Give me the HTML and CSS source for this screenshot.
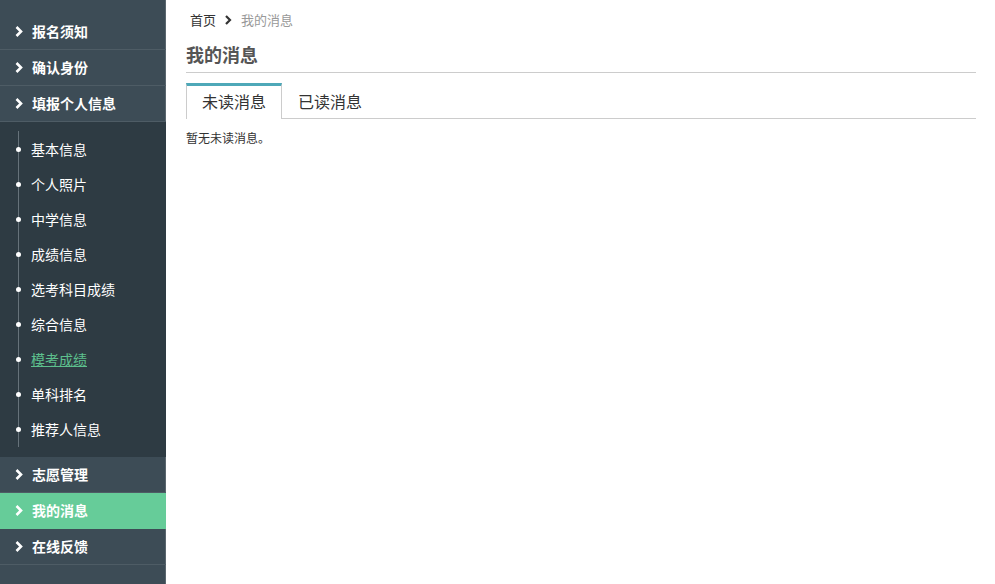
FILE: index.html
```html
<!DOCTYPE html>
<html lang="zh">
<head>
<meta charset="utf-8">
<title>我的消息</title>
<link rel="stylesheet" href="styles.css">
</head>
<body>
<div class="page">
  <aside class="sidebar">
    <div class="nav-item"><svg class="chev" viewBox="0 0 8 12"><polyline points="1.5,1.5 6,6 1.5,10.5"/></svg><span>报名须知</span></div>
    <div class="nav-item"><svg class="chev" viewBox="0 0 8 12"><polyline points="1.5,1.5 6,6 1.5,10.5"/></svg><span>确认身份</span></div>
    <div class="nav-item"><svg class="chev" viewBox="0 0 8 12"><polyline points="1.5,1.5 6,6 1.5,10.5"/></svg><span>填报个人信息</span></div>
    <ul class="submenu">
      <li>基本信息</li>
      <li>个人照片</li>
      <li>中学信息</li>
      <li>成绩信息</li>
      <li>选考科目成绩</li>
      <li>综合信息</li>
      <li class="link">模考成绩</li>
      <li>单科排名</li>
      <li>推荐人信息</li>
    </ul>
    <div class="nav-item"><svg class="chev" viewBox="0 0 8 12"><polyline points="1.5,1.5 6,6 1.5,10.5"/></svg><span>志愿管理</span></div>
    <div class="nav-item active"><svg class="chev" viewBox="0 0 8 12"><polyline points="1.5,1.5 6,6 1.5,10.5"/></svg><span>我的消息</span></div>
    <div class="nav-item"><svg class="chev" viewBox="0 0 8 12"><polyline points="1.5,1.5 6,6 1.5,10.5"/></svg><span>在线反馈</span></div>
  </aside>
  <main class="main">
    <div class="crumbs">
      <span class="crumb-home">首页</span>
      <svg class="crumb-sep" viewBox="0 0 8 12"><polyline points="2,2 6,6 2,10"/></svg>
      <span class="crumb-cur">我的消息</span>
    </div>
    <h1 class="title">我的消息</h1>
    <div class="tabs">
      <div class="tab active">未读消息</div>
      <div class="tab">已读消息</div>
    </div>
    <p class="empty">暂无未读消息。</p>
  </main>
</div>
</body>
</html>
```

FILE: styles.css
```css
html, body {
  margin: 0;
  padding: 0;
  height: 100%;
}
body {
  font-family: "Noto Sans CJK SC", "Microsoft YaHei", sans-serif;
  background: #fff;
  color: #333;
}
.page {
  display: flex;
  height: 584px;
}
.sidebar {
  width: 166px;
  flex: none;
  background: #3d4c56;
  padding-top: 14px;
  box-sizing: border-box;
  box-shadow: inset -1px 0 0 #5b676f;
}
.nav-item {
  border-bottom: 1px solid #4e5c65;
  display: flex;
  align-items: center;
  padding-left: 15px;
  color: #fff;
  font-size: 14px;
  font-weight: bold;
  line-height: 1;
  padding-bottom: 1px;
  box-sizing: content-box;
  height: 34px;
  box-shadow: inset -1px 0 0 #5b676f;
}
.nav-item.active {
  background: #66cc99;
  border-bottom-color: #66cc99;
  box-shadow: none;
}
.chev {
  width: 8px;
  height: 13px;
  margin-right: 9px;
  fill: none;
  stroke: #fff;
  stroke-width: 2.6;
}
.submenu {
  list-style: none;
  margin: 0;
  padding: 10px 0;
  background: #2e3b43;
  position: relative;
}
.submenu::before {
  content: "";
  position: absolute;
  left: 18px;
  top: 9px;
  bottom: 10px;
  width: 1px;
  background: #66727a;
}
.submenu li {
  height: 35px;
  line-height: 35px;
  padding-left: 31px;
  color: #fff;
  font-size: 14px;
  position: relative;
}
.submenu li::before {
  content: "";
  position: absolute;
  left: 16px;
  top: 15px;
  width: 5px;
  height: 5px;
  border-radius: 50%;
  background: #fff;
}
.submenu li.link {
  color: #5dc08d;
  text-decoration: underline;
}
.main {
  flex: 1;
  padding: 0 19px 0 20px;
}
.crumbs {
  display: flex;
  align-items: center;
  height: 39px;
  padding-left: 4px;
  font-size: 13px;
}
.crumb-home {
  color: #333;
}
.crumb-sep {
  width: 8px;
  height: 12px;
  margin: 0 9px 0 8px;
  fill: none;
  stroke: #333;
  stroke-width: 2.2;
}
.crumb-cur {
  color: #999;
}
.title {
  margin: 0;
  font-size: 18px;
  font-weight: bold;
  color: #555;
  height: 33px;
  line-height: 31px;
  border-bottom: 1px solid #ccc;
}
.tabs {
  display: flex;
  margin-top: 10px;
  border-bottom: 1px solid #ccc;
  height: 35px;
}
.tab {
  font-size: 16px;
  color: #333;
  padding: 0 15px;
  border-top: 3px solid transparent;
  border-left: 1px solid transparent;
  border-right: 1px solid transparent;
  margin-bottom: -1px;
  height: 32px;
  line-height: 31px;
  padding-bottom: 1px;
}
.tab.active {
  border-top-color: #4ea8b8;
  border-left-color: #ccc;
  border-right-color: #ccc;
  background: #fff;
}
.empty {
  margin: 10px 0 0;
  font-size: 12px;
  color: #333;
}
```
